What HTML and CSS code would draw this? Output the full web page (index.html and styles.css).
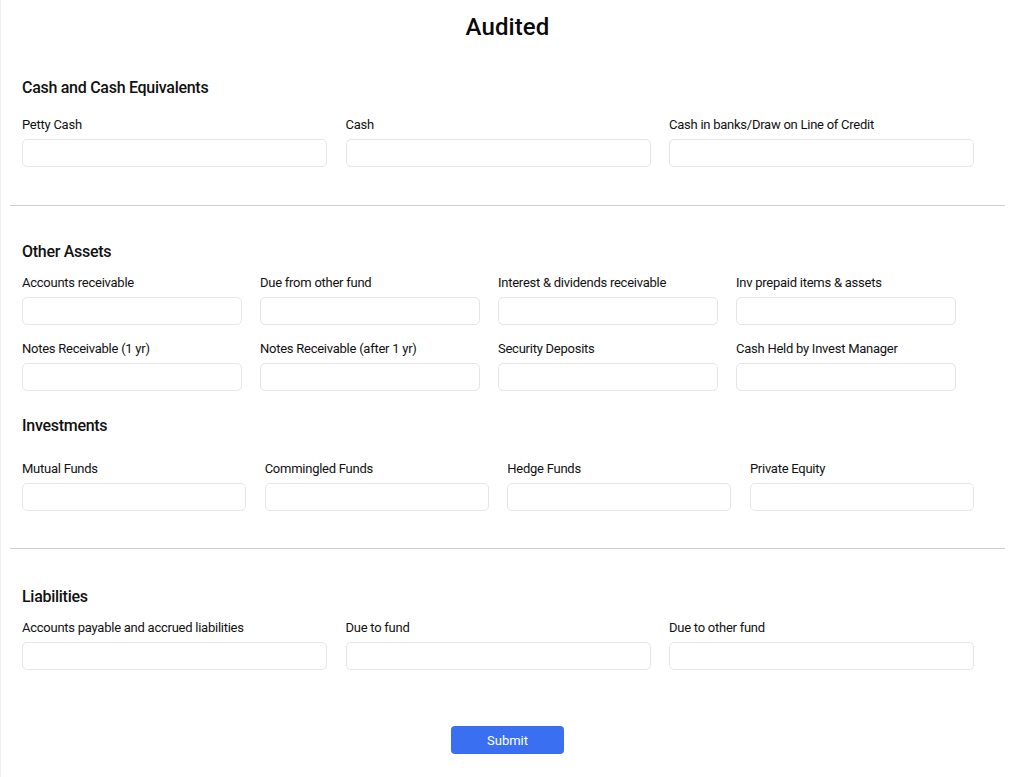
FILE: index.html
```html
<!DOCTYPE html>
<html lang="en">
<head>
<meta charset="utf-8">
<title>Audited</title>
<link rel="stylesheet" href="styles.css">
</head>
<body>
<div class="page">
  <h1 class="title">Audited</h1>
  <form class="form">
    <section class="section s-cash">
      <h2 class="heading">Cash and Cash Equivalents</h2>
      <div class="grid cols-3">
        <label class="field"><span class="label">Petty Cash</span><input class="input" type="text"></label>
        <label class="field"><span class="label">Cash</span><input class="input" type="text"></label>
        <label class="field"><span class="label">Cash in banks/Draw on Line of Credit</span><input class="input" type="text"></label>
      </div>
    </section>
    <hr class="divider d1">
    <section class="section s-other">
      <h2 class="heading">Other Assets</h2>
      <div class="grid cols-4 narrow">
        <label class="field"><span class="label">Accounts receivable</span><input class="input" type="text"></label>
        <label class="field"><span class="label">Due from other fund</span><input class="input" type="text"></label>
        <label class="field"><span class="label">Interest &amp; dividends receivable</span><input class="input" type="text"></label>
        <label class="field"><span class="label">Inv prepaid items &amp; assets</span><input class="input" type="text"></label>
        <label class="field"><span class="label">Notes Receivable (1 yr)</span><input class="input" type="text"></label>
        <label class="field"><span class="label">Notes Receivable (after 1 yr)</span><input class="input" type="text"></label>
        <label class="field"><span class="label">Security Deposits</span><input class="input" type="text"></label>
        <label class="field"><span class="label">Cash Held by Invest Manager</span><input class="input" type="text"></label>
      </div>
    </section>
    <section class="section s-inv">
      <h2 class="heading">Investments</h2>
      <div class="grid cols-4">
        <label class="field"><span class="label">Mutual Funds</span><input class="input" type="text"></label>
        <label class="field"><span class="label">Commingled Funds</span><input class="input" type="text"></label>
        <label class="field"><span class="label">Hedge Funds</span><input class="input" type="text"></label>
        <label class="field"><span class="label">Private Equity</span><input class="input" type="text"></label>
      </div>
    </section>
    <hr class="divider d2">
    <section class="section s-liab">
      <h2 class="heading">Liabilities</h2>
      <div class="grid cols-3">
        <label class="field"><span class="label">Accounts payable and accrued liabilities</span><input class="input" type="text"></label>
        <label class="field"><span class="label">Due to fund</span><input class="input" type="text"></label>
        <label class="field"><span class="label">Due to other fund</span><input class="input" type="text"></label>
      </div>
    </section>
    <div class="actions">
      <button class="submit" type="button">Submit</button>
    </div>
  </form>
</div>
</body>
</html>
```

FILE: styles.css
```css
* { box-sizing: border-box; }

html, body {
  margin: 0;
  padding: 0;
  background: #ffffff;
}

body {
  font-family: Roboto, "Liberation Sans", sans-serif;
  color: #111111;
  border-left: 1px solid #f0f0f0;
  min-height: 777px;
}

.page {
  padding: 12px 7px 20px 9px;
}

.title {
  margin: 0;
  text-align: center;
  font-size: 24px;
  line-height: 30px;
  font-weight: 500;
  color: #0a0a0a;
  letter-spacing: 0.1px;
}

.form {
  margin: 0;
}

.section {
  padding: 0 12px;
}

.heading {
  margin: 0;
  padding-top: 1px;
  font-size: 16px;
  line-height: 20px;
  font-weight: 500;
  color: #111111;
  letter-spacing: -0.28px;
}

.s-cash { margin-top: 35px; }
.s-cash .heading { margin-bottom: 18px; }
.s-other .heading { margin-bottom: 12px; }
.s-inv { margin-top: 24px; }
.s-inv .heading { margin-bottom: 24px; }
.s-liab .heading { margin-bottom: 12px; }

.grid {
  display: grid;
  width: 952px;
  column-gap: 18.5px;
  row-gap: 15px;
}

.cols-3 { grid-template-columns: repeat(3, 1fr); }
.cols-4 { grid-template-columns: repeat(4, 1fr); }
.grid.narrow { width: 934px; column-gap: 18px; }

.field {
  display: flex;
  flex-direction: column;
  gap: 6px;
}

.label {
  font-size: 13px;
  line-height: 16px;
  padding-top: 1px;
  color: #111111;
  letter-spacing: -0.25px;
}

.input {
  display: block;
  width: 100%;
  height: 28px;
  margin: 0;
  padding: 0 8px;
  border: 1px solid #e6e6e6;
  border-radius: 5px;
  background: #ffffff;
  font: inherit;
  font-size: 13px;
}

.divider {
  margin: 0;
  border: 0;
  height: 1px;
  background: #cfcfcf;
}

.d1 { margin-top: 38px; margin-bottom: 35px; }
.d2 { margin-top: 37px; margin-bottom: 37px; }

.actions {
  display: flex;
  justify-content: center;
  margin-top: 56px;
}

.submit {
  width: 113px;
  height: 28px;
  border: 0;
  border-radius: 4px;
  background: #3a6ff2;
  color: #ffffff;
  font-family: inherit;
  font-size: 13px;
  font-weight: 400;
  cursor: pointer;
}
```
